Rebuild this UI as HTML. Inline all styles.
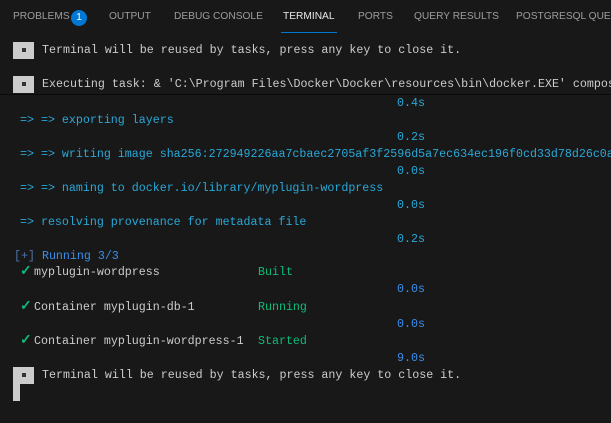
<!DOCTYPE html>
<html><head><meta charset="utf-8"><style>
body{margin:0;width:611px;height:423px;background:#181818;overflow:hidden;position:relative;font-family:"Liberation Mono",monospace;font-size:11.65px;color:#cccccc}
.tab{position:absolute;top:11px;font-family:"Liberation Sans",sans-serif;font-size:10.2px;color:#9d9d9d;white-space:nowrap}
.l{position:absolute;white-space:pre;line-height:17px}
.c{color:#29a8d8}.b{color:#3b8eea}.g{color:#0dbc79}
.ck{color:#0dbc79;font-size:14px;font-weight:bold}
.box{position:absolute;background:#cccccc;width:21px;height:17px;left:13px}
.box:after{content:"";position:absolute;left:9px;top:6px;width:4px;height:4px;background:#333}
</style></head><body>
<div class="tab" style="left:13px">PROBLEMS</div>
<div style="position:absolute;left:71px;top:10px;width:16px;height:16px;border-radius:50%;background:#0078d4;color:#fff;font-family:'Liberation Sans',sans-serif;font-size:10px;text-align:center;line-height:16px">1</div>
<div class="tab" style="left:109px">OUTPUT</div>
<div class="tab" style="left:174px">DEBUG CONSOLE</div>
<div class="tab" style="left:283px;color:#e7e7e7">TERMINAL</div>
<div style="position:absolute;left:281px;top:32px;width:56px;height:1px;background:#0078d4"></div>
<div class="tab" style="left:358px">PORTS</div>
<div class="tab" style="left:414px">QUERY RESULTS</div>
<div class="tab" style="left:516px">POSTGRESQL QUERY</div>

<div class="box" style="top:42px"></div>
<div class="l" style="left:42px;top:42px">Terminal will be reused by tasks, press any key to close it.</div>
<div class="box" style="top:76px"></div>
<div class="l" style="left:42px;top:76px">Executing task: &amp; 'C:\Program Files\Docker\Docker\resources\bin\docker.EXE' compose</div>
<div style="position:absolute;left:0;top:94px;width:611px;height:1px;background:#0a0a0a"></div>

<div class="l c" style="left:397px;top:95px">0.4s</div>
<div class="l c" style="left:20px;top:112px">=&gt; =&gt; exporting layers</div>
<div class="l c" style="left:397px;top:129px">0.2s</div>
<div class="l c" style="left:20px;top:146px">=&gt; =&gt; writing image sha256:272949226aa7cbaec2705af3f2596d5a7ec634ec196f0cd33d78d26c0a</div>
<div class="l c" style="left:397px;top:163px">0.0s</div>
<div class="l c" style="left:20px;top:180px">=&gt; =&gt; naming to docker.io/library/myplugin-wordpress</div>
<div class="l c" style="left:397px;top:197px">0.0s</div>
<div class="l c" style="left:20px;top:214px">=&gt; resolving provenance for metadata file</div>
<div class="l c" style="left:397px;top:231px">0.2s</div>
<div class="l" style="left:14px;top:248px"><span style="color:#4e73a8">[+]</span><span class="b"> Running 3/3</span></div>
<div class="l ck" style="left:20px;top:264px">✓</div><div class="l" style="left:34px;top:264px">myplugin-wordpress</div><div class="l g" style="left:258px;top:264px">Built</div>
<div class="l b" style="left:397px;top:281px">0.0s</div>
<div class="l ck" style="left:20px;top:299px">✓</div><div class="l" style="left:34px;top:299px">Container myplugin-db-1</div><div class="l g" style="left:258px;top:299px">Running</div>
<div class="l b" style="left:397px;top:316px">0.0s</div>
<div class="l ck" style="left:20px;top:333px">✓</div><div class="l" style="left:34px;top:333px">Container myplugin-wordpress-1</div><div class="l g" style="left:258px;top:333px">Started</div>
<div class="l b" style="left:397px;top:350px">9.0s</div>
<div class="box" style="top:367px"></div>
<div style="position:absolute;left:13px;top:384px;width:7px;height:17px;background:#cccccc"></div>
<div class="l" style="left:42px;top:367px">Terminal will be reused by tasks, press any key to close it.</div>
</body></html>
